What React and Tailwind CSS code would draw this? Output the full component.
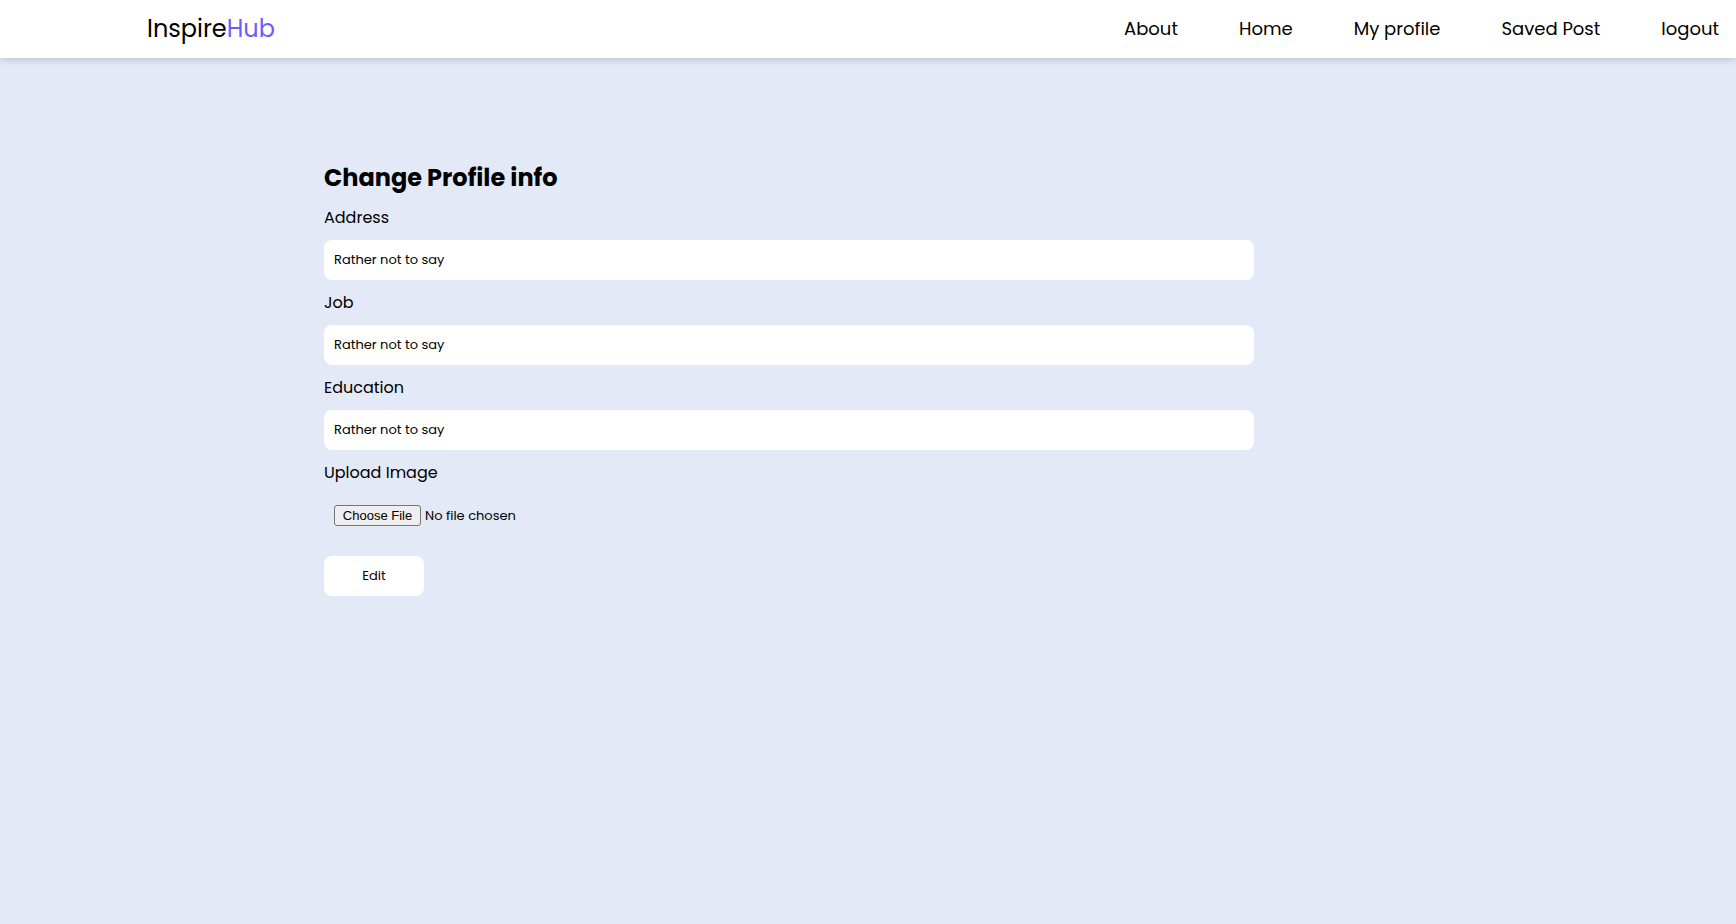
const links = ['About', 'Home', 'My profile', 'Saved Post', 'logout'];
const fields = [
  { id: 'address', label: 'Address' },
  { id: 'job', label: 'Job' },
  { id: 'education', label: 'Education' },
];

function Field({ id, label }) {
  return (
    <div className="flex flex-col gap-2.5">
      <label htmlFor={id} className="text-base leading-[25px]">{label}</label>
      <input
        id={id}
        type="text"
        defaultValue="Rather not to say"
        className="h-10 w-full rounded-lg bg-white px-2.5 text-[13px] outline-none"
      />
    </div>
  );
}

export default function App() {
  return (
    <div className="min-h-screen bg-[#e3e9f7] font-['Poppins','Inter',sans-serif] text-black">
      <header className="flex h-[58px] items-center justify-between bg-white pr-[17px] pl-6 shadow-[0_1px_8px_rgba(0,0,0,0.2)] lg:pl-[147px]">
        <a href="#home" className="text-2xl leading-8">
          Inspire<span className="text-[#6c5dfc]">Hub</span>
        </a>
        <nav className="flex items-center gap-[61px]">
          {links.map((name) => (
            <a key={name} href="#" className="text-lg whitespace-nowrap">{name}</a>
          ))}
        </nav>
      </header>
      <main className="px-6 pt-[102px] pb-10 lg:pl-[324px]">
        <form className="flex max-w-[930px] flex-col" onSubmit={(e) => e.preventDefault()}>
          <h1 className="text-2xl leading-9 font-bold">Change Profile info</h1>
          <div className="mt-[9px] flex flex-col gap-2.5">
            {fields.map((field) => (
              <Field key={field.id} {...field} />
            ))}
            <label htmlFor="image" className="text-base leading-[25px]">Upload Image</label>
            <input
              id="image"
              type="file"
              className="h-10 w-full rounded-lg p-2.5 text-[13px] leading-5 file:mr-1 file:h-[21px] file:w-[87px] file:rounded-[3px] file:border file:border-solid file:border-[#767676] file:bg-[#efefef] file:px-1.5 file:font-['Liberation_Sans',Arial,sans-serif] file:text-[13px] file:leading-4 file:text-black"
            />
          </div>
          <button type="submit" className="mt-[21px] h-10 w-[100px] rounded-lg bg-white text-[13px]">Edit</button>
        </form>
      </main>
    </div>
  );
}
